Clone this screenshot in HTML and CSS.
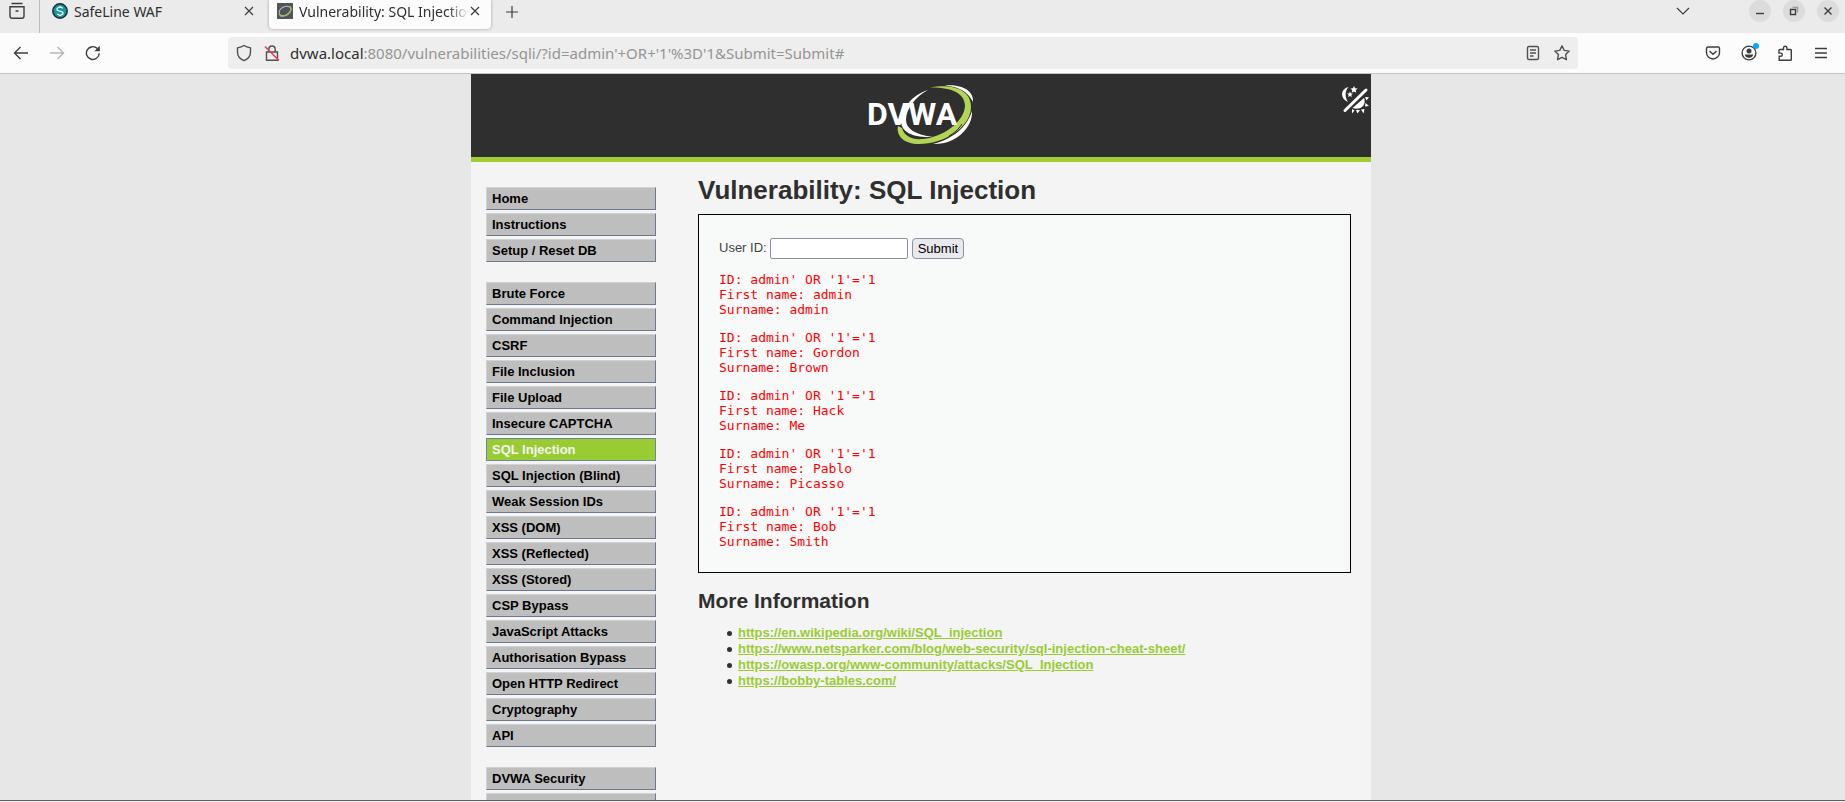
FILE: index.html
```html
<!DOCTYPE html>
<html lang="en">
<head>
<meta charset="utf-8">
<title>Vulnerability: SQL Injection</title>
<link rel="stylesheet" href="styles.css">
</head>
<body>
<div class="browser">
  <header class="tabbar">
    <button class="icon-btn tab-history" aria-label="Recent browsing"><svg width="18" height="18" viewBox="0 0 18 18"><path d="M3.500 1.500h11M2 4.800h14v9.200a2.200 2.200 0 0 1-2.200 2.200H4.200A2.200 2.200 0 0 1 2 14zM7.500 9h3"/></svg></button>
    <div class="tab">
      <svg width="16" height="16" viewBox="0 0 16 16"><circle cx="8" cy="8" r="7.200" fill="#14969b" stroke="#1c2b35" stroke-width="1.500"/><path d="M10.800 5.200 8 3.800 5.200 5.300v2l5.600 1.800v2L8 12.500l-2.800-1.600" stroke="#eaffff" stroke-width="1.300"/></svg>
      <span class="tab-title">SafeLine WAF</span>
      <button class="icon-btn close" aria-label="Close tab"><svg width="10" height="10" viewBox="0 0 10 10"><path d="m1 1 8 8M9 1 1 9"/></svg></button>
    </div>
    <div class="tab tab-active">
      <svg width="16" height="16" viewBox="0 0 16 16"><path d="M0 0h16v16H0z" fill="#50555b" stroke="none"/><ellipse cx="8" cy="8" rx="6.300" ry="4.300" transform="rotate(-28 8 8)" stroke="#b9beb8" stroke-width="1"/><path d="M2.500 11.500c1 3 6 2 9-1 3-3 3.500-6 1-7.500" stroke="#a3bd55" stroke-width="1.200"/></svg>
      <span class="tab-title">Vulnerability: SQL Injection</span>
      <button class="icon-btn close" aria-label="Close tab"><svg width="10" height="10" viewBox="0 0 10 10"><path d="m1 1 8 8M9 1 1 9"/></svg></button>
    </div>
    <button class="icon-btn new-tab" aria-label="New tab"><svg width="14" height="14" viewBox="0 0 14 14"><path d="M7 1v12M1 7h12"/></svg></button>
    <button class="icon-btn all-tabs" aria-label="List all tabs"><svg width="14" height="10" viewBox="0 0 14 10"><path d="m1 2 6 6 6-6"/></svg></button>
    <div class="window-controls">
      <button aria-label="Minimize"><svg width="22" height="22" viewBox="0 0 22 22"><path d="M7 13.500h8"/></svg></button>
      <button aria-label="Restore"><svg width="22" height="22" viewBox="0 0 22 22"><path d="M7.500 9.500h5v5h-5z"/><path d="M9.500 7.500h5v5" stroke="#999"/></svg></button>
      <button aria-label="Close"><svg width="22" height="22" viewBox="0 0 22 22"><path d="m7.500 7.500 7 7m0-7-7 7"/></svg></button>
    </div>
  </header>

  <nav class="toolbar">
    <div class="nav-buttons">
      <button class="icon-btn" aria-label="Back"><svg width="16" height="16" viewBox="0 0 16 16"><path d="M15 8H1.500M7.500 2l-6 6 6 6"/></svg></button>
      <button class="icon-btn dim" aria-label="Forward"><svg width="16" height="16" viewBox="0 0 16 16"><path d="M1 8h13.500M8.500 2l6 6-6 6"/></svg></button>
      <button class="icon-btn" aria-label="Reload"><svg width="16" height="16" viewBox="0 0 16 16"><path d="M14.200 8.200A6.400 6.400 0 1 1 12.300 3.500"/><path d="M14.800.8v5.400H9.400z" fill="#3d3d3d" stroke="none"/></svg></button>
    </div>
    <div class="urlbar">
      <svg width="16" height="18" viewBox="0 0 16 18"><path d="M8 1.500c2 1.400 4.200 2 6.500 2.400v4.200c0 4-2.500 7-6.500 8.600-4-1.600-6.500-4.600-6.500-8.600V3.900C3.800 3.500 6 2.900 8 1.500z"/></svg>
      <svg width="16" height="18" viewBox="0 0 16 18"><path d="M2.500 8h11v8.200h-11zM4.800 8V5.200a3.200 3.200 0 0 1 6.400 0V8"/><path d="m1 2.500 14 14" stroke="#f2355f" stroke-width="1.600"/></svg>
      <p class="url"><b>dvwa.local</b>:8080/vulnerabilities/sqli/?id=admin'+OR+'1'%3D'1&amp;Submit=Submit#</p>
      <svg width="16" height="18" viewBox="0 0 16 18"><rect x="2.500" y="2.500" width="11" height="13" rx="1.500"/><path d="M5 6h6M5 9h6M5 12h3.500"/></svg>
      <svg class="star" width="18" height="18" viewBox="0 0 18 18"><path d="m9 1.800 2.200 4.600 5 .7-3.600 3.500.9 5.100L9 13.300l-4.500 2.400.9-5.100L1.800 7.100l5-.7z" stroke-linejoin="round"/></svg>
    </div>
    <div class="tool-buttons">
      <button class="icon-btn" aria-label="Pocket"><svg width="16" height="16" viewBox="0 0 16 16"><path d="M2.800 2h10.400a1.300 1.300 0 0 1 1.300 1.300V7.500a6.500 6.500 0 0 1-13 0V3.300A1.300 1.300 0 0 1 2.800 2zM4.500 6 8 9.300 11.500 6"/></svg></button>
      <button class="icon-btn account" aria-label="Account"><svg width="16" height="16" viewBox="0 0 16 16"><circle cx="8" cy="8" r="6.900"/><circle cx="8" cy="6" r="2.500" fill="#3d3d3d" stroke="none"/><path d="M3.800 9.600h8.400c0 2-2 3.300-4.200 3.300s-4.200-1.300-4.200-3.300z" fill="#3d3d3d" stroke="none"/></svg><span class="dot"></span></button>
      <button class="icon-btn" aria-label="Extensions"><svg width="16" height="16" viewBox="0 0 16 16"><path d="M2 5.500a1 1 0 0 1 1-1h3.500V3a1.700 1.700 0 0 1 3.400 0v1.500h3.600a.8.8 0 0 1 .8.800v9.200a.8.8 0 0 1-.8.800H2.200v-4h1.500a1.600 1.600 0 0 0 0-3.200H2z"/></svg></button>
      <button class="icon-btn" aria-label="Menu"><svg width="16" height="16" viewBox="0 0 16 16"><path d="M2 3.500h12M2 8h12M2 12.500h12"/></svg></button>
    </div>
  </nav>

  <div class="viewport">
    <div class="page">
      <header class="banner">
        <svg class="logo" width="108" height="64" viewBox="0 0 108 64" role="img" aria-label="DVWA">
          <path d="M61 7C45 12 34 26 34 38c0 11 12 17 32 16-17-2-27-8-27-17C39 26 48 14 61 7z" fill="#fff"/>
          <path d="M63 4.500C86 0 105 7 104 25 103 45 76 61 52 61 37 61 29 53 31 43l4 2c2 8 10 12 21 11 20-2 41-17 42-33C98 10 84 4 63 4.500z" fill="#b2d555"/>
          <path d="M78 2.500C95 1 107 8 106 19 101 9 93 4 78 2.500z" fill="#fff"/>
          <path d="M105 28c1 17-17 34-39 33 20-5 34-17 39-33z" fill="#fff"/>
          <path d="M95 41c-4 6-8 9-13 12" stroke="#2f2f2f" stroke-width="1"/>
          <text class="logo-text" x="0" y="42">DVWA</text>
        </svg>
        <button class="theme" aria-label="Toggle theme"><svg width="28" height="28" viewBox="0 0 28 28" fill="#fff"><path d="M7.500 1C-1 3-1 13 7 16 4 12 3.500 5 7.500 1z"/><path d="m13 0 1.100 2.300 2.500.3-1.900 1.700.6 2.500L13 5.500l-2.300 1.300.6-2.500-1.900-1.700 2.500-.3zM9 5.500l.9 1.900 2 .2-1.500 1.400.4 2L9 10l-1.800 1 .4-2-1.500-1.400 2-.2z"/><path d="M25 4 4 24.500" stroke="#fff" stroke-width="3" stroke-linecap="round"/><path d="M23 12c3 7-4 13-11.500 10z"/><path d="m24 11 4 .3-2.500 3.200zM24.500 17l3.500 3-4 .5zM20 23.500l3.500-.5-1 4.500zM15 24h4l-2.500 3.500zM11 23l2.500 1.500-2.500 3z"/></svg></button>
      </header>
      <div class="columns">
        <aside class="menu">
          <ul>
            <li><a href="#">Home</a></li>
            <li><a href="#">Instructions</a></li>
            <li><a href="#">Setup / Reset DB</a></li>
          </ul>
          <ul>
            <li><a href="#">Brute Force</a></li>
            <li><a href="#">Command Injection</a></li>
            <li><a href="#">CSRF</a></li>
            <li><a href="#">File Inclusion</a></li>
            <li><a href="#">File Upload</a></li>
            <li><a href="#">Insecure CAPTCHA</a></li>
            <li><a class="selected" href="#">SQL Injection</a></li>
            <li><a href="#">SQL Injection (Blind)</a></li>
            <li><a href="#">Weak Session IDs</a></li>
            <li><a href="#">XSS (DOM)</a></li>
            <li><a href="#">XSS (Reflected)</a></li>
            <li><a href="#">XSS (Stored)</a></li>
            <li><a href="#">CSP Bypass</a></li>
            <li><a href="#">JavaScript Attacks</a></li>
            <li><a href="#">Authorisation Bypass</a></li>
            <li><a href="#">Open HTTP Redirect</a></li>
            <li><a href="#">Cryptography</a></li>
            <li><a href="#">API</a></li>
          </ul>
          <ul>
            <li><a href="#">DVWA Security</a></li>
            <li><a href="#">PHP Info</a></li>
          </ul>
        </aside>
        <main class="content">
          <h1>Vulnerability: SQL Injection</h1>
          <section class="panel">
            <form class="query">
              <label for="uid">User ID:</label>
              <input id="uid" type="text">
              <button type="button">Submit</button>
            </form>
            <pre>ID: admin' OR '1'='1
First name: admin
Surname: admin</pre>
            <pre>ID: admin' OR '1'='1
First name: Gordon
Surname: Brown</pre>
            <pre>ID: admin' OR '1'='1
First name: Hack
Surname: Me</pre>
            <pre>ID: admin' OR '1'='1
First name: Pablo
Surname: Picasso</pre>
            <pre>ID: admin' OR '1'='1
First name: Bob
Surname: Smith</pre>
          </section>
          <h2>More Information</h2>
          <ul class="links">
            <li><a href="#">https://en.wikipedia.org/wiki/SQL_injection</a></li>
            <li><a href="#">https://www.netsparker.com/blog/web-security/sql-injection-cheat-sheet/</a></li>
            <li><a href="#">https://owasp.org/www-community/attacks/SQL_Injection</a></li>
            <li><a href="#">https://bobby-tables.com/</a></li>
          </ul>
        </main>
      </div>
    </div>
  </div>
</div>
</body>
</html>
```
FILE: styles.css
```css
* { box-sizing: border-box; }

body {
  margin: 0;
  font-family: "Liberation Sans", Arial, sans-serif;
  font-size: 13px;
  color: #2f2f2f;
}

.browser {
  display: flex;
  flex-direction: column;
  height: 100vh;
  overflow: hidden;
  background: #f4f4f4;
  padding-bottom: 1px;
}

svg { display: block; flex: none; fill: none; stroke: #3d3d3d; stroke-width: 1.4; }

.icon-btn {
  display: flex;
  flex: none;
  padding: 0;
  border: 0;
  background: none;
}

/* Tab strip */
.tabbar {
  display: flex;
  flex: none;
  align-items: flex-start;
  height: 33px;
  background: #ebebeb;
  font-family: "Noto Sans", sans-serif;
  font-size: 14px;
}

.tab-history {
  width: 40px;
  height: 33px;
  padding: 2px 8px;
  border-right: 1px solid #bdbdbd;
}

.tab {
  display: flex;
  align-items: center;
  width: 222px;
  height: 29px;
  margin-right: 7px;
  padding: 0 8px 7px 12px;
  gap: 6px;
}

.tab-active {
  padding: 0 11px 7px 8px;
  background: #fcfcfc;
  border-radius: 0 0 4px 4px;
  box-shadow: 0 0 3px #999;
}

.tab-title {
  flex: 1;
  overflow: hidden;
  white-space: nowrap;
}

.tab-active .tab-title { margin-right: -4px; mask-image: linear-gradient(to left, transparent, #000 20px); }

.close svg, .new-tab svg, .all-tabs svg { stroke-width: 1.2; }
.new-tab { margin: 5px 0 0 7px; }
.all-tabs { margin: 6px 59px 0 auto; }

.window-controls { display: flex; gap: 12px; margin-right: 6px; }

.window-controls button {
  width: 22px;
  height: 22px;
  padding: 0;
  border: 0;
  border-radius: 50%;
  background: #dcdcdc;
}

/* Navigation toolbar */
.toolbar {
  display: flex;
  flex: none;
  align-items: center;
  height: 41px;
  background: #fcfcfc;
  border-bottom: 1px solid #c4c4c4;
}

.nav-buttons { display: flex; flex: none; gap: 20px; width: 228px; padding-left: 13px; }
.dim svg { stroke: #b5b5b5; }

.urlbar {
  display: flex;
  flex: 1;
  align-items: center;
  gap: 12px;
  height: 32px;
  padding: 0 7px 0 8px;
  border-radius: 4px;
  background: #eee;
}

.urlbar svg { stroke: #505050; }
.url {
  flex: 1;
  margin: 0 0 0 -2px;
  font-family: "Noto Sans", sans-serif;
  font-size: 15px;
  color: #959595;
  white-space: nowrap;
}
.url b { font-weight: 400; color: #2f2f2f; }

.tool-buttons {
  display: flex;
  flex: none;
  justify-content: flex-end;
  gap: 20px;
  width: 267px;
  padding-right: 16px;
}

.account { position: relative; }
.dot {
  position: absolute;
  top: -2px;
  right: -2px;
  width: 6px;
  height: 6px;
  border-radius: 50%;
  background: #00a8ff;
}

/* Web page */
.viewport {
  flex: 1;
  min-height: 0;
  overflow: hidden;
  padding-right: 3px;
  background: #e7e7e7;
  border-bottom: 1px solid #5c5c5c;
}

.page {
  max-width: 900px;
  min-height: 100%;
  margin: 0 auto;
  background: #f4f4f4;
}

.banner {
  position: relative;
  display: flex;
  justify-content: center;
  padding: 9px 0 10px;
  border-bottom: 5px solid #a1cc33;
  background: #2f2f2f;
}

.logo, .theme svg { stroke: none; }
.logo-text { font: 700 32px Roboto, sans-serif; fill: #fff; }
.theme { position: absolute; top: 12px; right: 2px; padding: 0; border: 0; background: none; }
.theme svg { fill: #fff; }

.columns { display: flex; padding: 0 20px 0 15px; }

.menu { flex: none; width: 170px; margin-right: 42px; padding-top: 25px; }
.menu ul { margin: 0 0 20px; padding: 0; list-style: none; }
.menu li + li { margin-top: 3px; }

.menu a {
  display: block;
  height: 23px;
  padding: 0 5px;
  border: 1px solid;
  border-color: #d2d2d2 #6b7890 #6b7890 #d2d2d2;
  background: #bebebe;
  color: #000;
  font-weight: 700;
  line-height: 21px;
  text-decoration: none;
}

.menu a.selected { border-color: #6b85a5; background: #9c3; color: #f4f4f4; }

.content { flex: 1; min-width: 0; padding-top: 12px; }

h1 { margin: 0 0 8px; font-size: 26px; line-height: 32px; }

.panel {
  padding: 23px 20px;
  border: 1px solid #000;
  background: #f8fafa;
}

.query { display: flex; gap: 3px; height: 21px; }
.query label { line-height: 20px; color: #444; }

.query input {
  width: 138px;
  padding: 1px 2px;
  margin-right: 1px;
  border: 1px solid #8f8f9d;
  border-radius: 2px;
  background: #fff;
  font: inherit;
}

.query button {
  padding: 0 5px;
  border: 1px solid #8f8f9d;
  border-radius: 4px;
  background: #e9e9ed;
  color: #000;
  font: inherit;
}

pre {
  margin: 13px 0 0;
  font: 13px/15px "DejaVu Sans Mono", monospace;
  color: #f00;
}

h2 { margin: 16px 0 12px; font-size: 21px; line-height: 24px; }

.links { margin: 0; padding-left: 40px; line-height: 16px; list-style: none; }

.links li::before {
  content: "";
  float: left;
  width: 5px;
  height: 5px;
  margin: 6px 0 0 -11px;
  border-radius: 50%;
  background: #2f2f2f;
}
.links a { color: #9c3; font-weight: 700; }
```
